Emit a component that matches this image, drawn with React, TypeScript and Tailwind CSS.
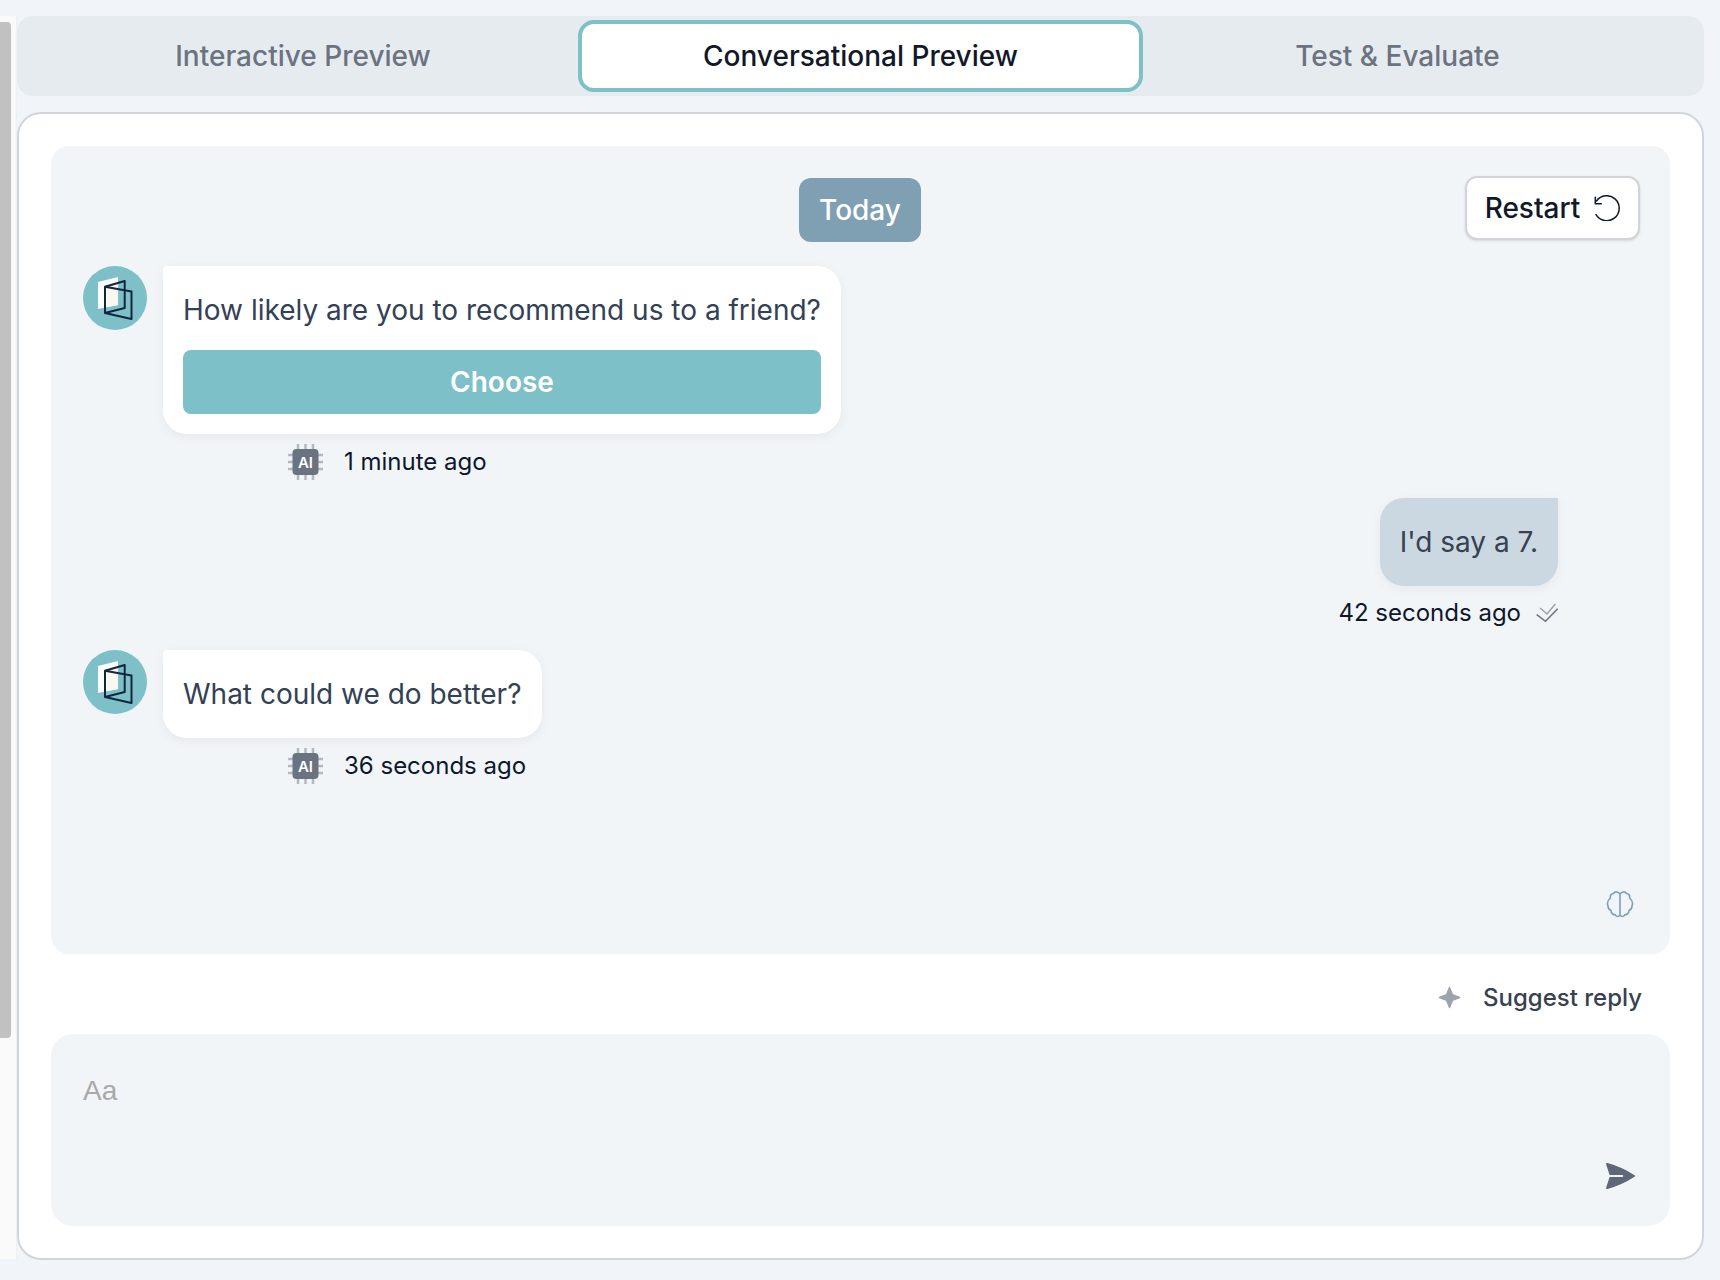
import React from "react";

const font = "font-['Inter',sans-serif]";
const bubbleShadow = "shadow-[0_3px_12px_rgba(15,23,42,0.05)]";

function Logo() {
  return (
    <div className="w-16 h-16 rounded-full bg-[#7dc0c8] shrink-0">
      <svg width="64" height="64" viewBox="0 0 64 64" fill="none">
        <path d="M15 16 L35 11 L35 39 L15 43 Z" fill="#fbfcfc" />
        <path d="M35 18 L35 39 L24 41 L24 21 Z" fill="#f9f7f0" />
        <path
          d="M22 20.7 L41.7 15 L41.7 42 L22 47 Z M22 20.7 L48.5 25.5 L48.5 53 L22 47 Z"
          stroke="#12253f"
          strokeWidth="2"
          strokeLinejoin="round"
        />
      </svg>
    </div>
  );
}

function AiChip() {
  return (
    <svg width="35" height="36" viewBox="0 0 35 36" className="shrink-0">
      <g stroke="#b4b9c1" strokeWidth="2.5">
        <path d="M10 0v36M17.5 0v36M25 0v36M0 11h35M0 18h35M0 25h35" />
      </g>
      <rect x="4.5" y="5" width="26" height="26" rx="4" fill="#6b7280" />
      <text x="17.5" y="23.5" textAnchor="middle" fontFamily="Inter, sans-serif" fontWeight="600" fontSize="15" fill="#ffffff">
        AI
      </text>
    </svg>
  );
}

function Bot({ children, time }: { children: React.ReactNode; time: string }) {
  return (
    <div>
      <div className="flex items-start gap-4">
        <Logo />
        {children}
      </div>
      <div className="flex items-center ml-[205px] mt-[10px] gap-[21px]">
        <AiChip />
        <span className="text-2xl text-[#0f172a]">{time}</span>
      </div>
    </div>
  );
}

export default function App() {
  return (
    <div className={`${font} w-[1720px] h-[1280px] bg-[#f1f5f9] flex`}>
      <div className="w-[17px] shrink-0 mt-4 mb-[21px] bg-[#fafafa] border-r border-[#eef0f2] pt-[6px]">
        <div className="w-[11px] h-[1016px] rounded-r bg-[#c1c1c1]" />
      </div>
      <div className="w-[1687px] pt-4 flex flex-col">
        <div className="h-20 rounded-2xl bg-[#e6ebf0] p-1 flex items-stretch text-[28px] font-medium">
          <button className="w-[557px] pl-[7px] text-[#6b7280]">Interactive Preview</button>
          <button className="w-[565px] rounded-2xl border-4 border-[#7dc0c8] bg-white text-[#111827]">
            Conversational Preview
          </button>
          <button className="flex-1 pr-[48px] text-[#6b7280]">Test &amp; Evaluate</button>
        </div>

        <div className="mt-4 h-[1148px] rounded-3xl border-2 border-[#d1d5db] bg-white px-8 pt-8">
          <div className="relative h-[808px] rounded-[18px] bg-[#f1f5f8] px-8 pt-8 pb-9 flex flex-col">
            <div className="self-center mr-[1px] h-16 w-[122px] rounded-xl bg-[#7f9fb3] text-white text-[28px] font-medium flex items-center justify-center">
              Today
            </div>
            <button className="absolute right-[30px] top-[30px] h-16 w-[175px] rounded-xl border-2 border-[#d1d5db] bg-white shadow-sm flex items-center justify-center gap-[14px] text-[28px] font-medium text-[#111827]">
              Restart
              <svg width="26" height="26" viewBox="0 0 26 26" fill="none" stroke="#111827" strokeWidth="1.5" strokeLinecap="round" strokeLinejoin="round">
                <path d="M2.5 6A12.5 12.5 0 1 1 2 19.7" />
                <path d="M1.3 2.3v6.4h6" />
              </svg>
            </button>

            <div className="mt-6">
              <Bot time="1 minute ago">
                <div className={`w-[678px] h-[168px] rounded-3xl rounded-tl-sm bg-white ${bubbleShadow} px-5 pt-6`}>
                  <p className="text-[28px] leading-10 text-[#334155] whitespace-nowrap">How likely are you to recommend us to a friend?</p>
                  <button className="mt-5 w-full h-16 rounded-lg bg-[#7dc0c8] text-white text-[28px] font-semibold">Choose</button>
                </div>
              </Bot>
            </div>

            <div className="mt-[18px] mr-20 self-end flex flex-col items-end">
              <div className={`h-[88px] px-5 rounded-3xl rounded-tr-none bg-[#cbd8e1] ${bubbleShadow} flex items-center text-[28px] text-[#374151]`}>
                I'd say a 7.
              </div>
              <div className="mt-[11px] flex items-center gap-[15px] text-2xl text-[#0f172a]">
                42 seconds ago
                <svg width="22" height="20" viewBox="0 0 22 20" fill="none" stroke="#6b7280" strokeWidth="1.5">
                  <path d="M4 5l7 6 8.3-10" stroke="#9ca3af" />
                  <path d="M0.7 11.7L9.5 18.300 21.7 5.7" />
                </svg>
              </div>
            </div>

            <div className="mt-[21px]">
              <Bot time="36 seconds ago">
                <div className={`w-[379px] h-[88px] rounded-3xl rounded-tl-sm bg-white ${bubbleShadow} px-5 flex items-center`}>
                  <p className="text-[28px] text-[#334155] whitespace-nowrap">What could we do better?</p>
                </div>
              </Bot>
            </div>

            <svg className="mt-auto self-end mr-1" width="28" height="28" viewBox="0 0 28 28" fill="none" stroke="#7f9fb3" strokeWidth="1.6" strokeLinejoin="round">
              <path d="M14 4.5v21" />
              <path d="M14 4.5C13 1.5 9 1 7.5 3.5 5 3.5 4 6 4.5 8 2 10 0.8 13 2 16 2 19 3.5 20 5 20.5 5 23 7 25 9 24.5 10 27 13 27 14 25" />
              <path d="M14 4.5C15 1.5 19 1 20.5 3.5 23 3.5 24 6 23.5 8 26 10 27.2 13 26 16 26 19 24.5 20 23 20.5 23 23 21 25 19 24.5 18 27 15 27 14 25" />
            </svg>
          </div>

          <div className="h-20 pt-[7px] pr-7 flex items-center justify-end gap-[22px] text-2xl font-medium text-[#374151]">
            <svg width="23" height="23" viewBox="0 0 24 24" fill="#9ca3af" stroke="#9ca3af" strokeWidth="1.5" strokeLinejoin="round">
              <path d="M12 1.5L15 9 22.5 12 15 15 12 22.5 9 15 1.5 12 9 9Z" />
            </svg>
            Suggest reply
          </div>

          <div className="h-[192px] rounded-[22px] bg-[#f1f5f8] pl-8 pr-[35px] pt-[41px] pb-[37px] flex flex-col">
            <div className="font-['Liberation_Sans',sans-serif] text-[28px] leading-8 text-[#a9a9a9]">Aa</div>
            <svg className="mt-auto self-end" width="29" height="26" viewBox="2.5 2.4 19.8 19.2" preserveAspectRatio="none" fill="#5f6878">
              <path d="M3.478 2.404a.75.75 0 0 0-.926.941l2.432 7.905H13.5a.75.75 0 0 1 0 1.5H4.984l-2.432 7.905a.75.75 0 0 0 .926.94 60.519 60.519 0 0 0 18.445-8.986.75.75 0 0 0 0-1.218A60.517 60.517 0 0 0 3.478 2.404Z" />
            </svg>
          </div>
        </div>
      </div>
    </div>
  );
}
